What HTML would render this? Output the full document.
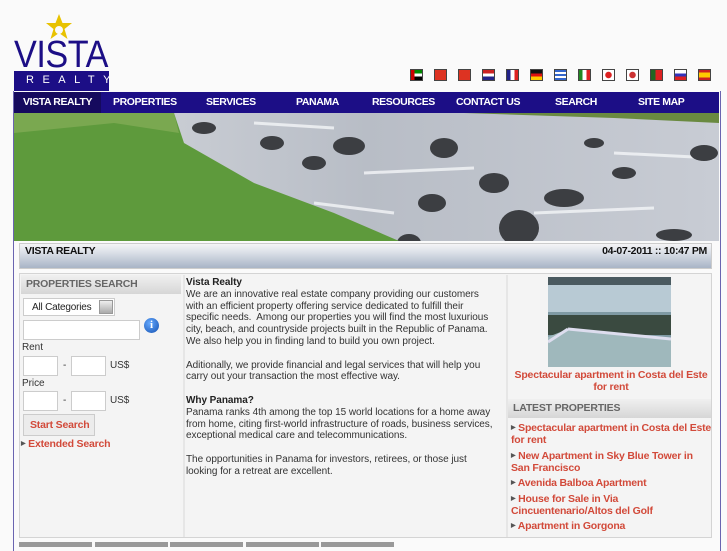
<!DOCTYPE html>
<html><head><meta charset="utf-8"><style>
*{margin:0;padding:0;box-sizing:border-box}
body{width:727px;height:545px;overflow:hidden;background:#fafafa;font-family:"Liberation Sans",sans-serif;position:relative}
.abs{position:absolute;white-space:nowrap}
#wrap{left:13px;top:91px;width:708px;height:460px;border-left:1px solid #6a64b0;border-right:1px solid #6a64b0}
#nav{left:14px;top:92px;width:705px;height:21px;background:#1c0e86;color:#fff;font-weight:bold;font-size:10.5px}
#nav span{position:absolute;top:4px;letter-spacing:-0.4px}
.flag{position:absolute;top:69px;width:13px;height:12px;border:1px solid #444}
.hbar{left:19px;top:243px;width:693px;height:26px;background:linear-gradient(#f4f4f6,#dfe3ea 30%,#a8b4c6);border:1px solid #ccc;font-size:10.5px;font-weight:bold;color:#111;letter-spacing:-0.3px}
.box{left:19px;top:273px;width:693px;height:265px;border:1px solid #d4d4d4;background:#f4f4f4}
.t{font-size:10px;color:#333;line-height:11.8px;letter-spacing:-0.05px}
.sh{background:linear-gradient(#f0f0f0,#d6d6d6);font-weight:bold;font-size:10.5px;color:#666;height:19px;padding:3px 0 0 5px;letter-spacing:-0.2px}
.inp{position:absolute;background:#fff;border:1px solid #ccc}
.red{color:#d24a3a;font-weight:bold;font-size:10.5px;letter-spacing:-0.2px}
.lp{position:absolute;left:511px;font-size:10.5px;color:#d24a3a;font-weight:bold;line-height:12px;letter-spacing:-0.2px;white-space:nowrap}
.arr{font-size:6px;color:#555;vertical-align:2px}
</style></head><body>
<svg class="abs" style="left:44px;top:14px" width="30" height="28" viewBox="0 0 30 28"><polygon points="15,0 18.5,9 28,9 20.5,15 23.5,25 15,19 6.5,25 9.5,15 2,9 11.5,9" fill="#e8c200"/><circle cx="15" cy="16" r="4" fill="#fafafa"/></svg>
<div class="abs" style="left:14px;top:36px;font-size:38px;line-height:38px;color:#1c0e86;transform:scaleX(0.9);transform-origin:left top;letter-spacing:-0.5px">VISTA</div>
<div class="abs" style="left:14px;top:71px;width:95px;height:20px;background:#1c0e86;color:#fff;font-size:11px;letter-spacing:8.5px;padding:3px 0 0 12px;overflow:hidden">REALTY</div>
<div class="flag" style="left:410px;background:linear-gradient(90deg,#c00 30%,transparent 30%),linear-gradient(#080 33%,#fff 33%,#fff 66%,#000 66%)"></div>
<div class="flag" style="left:434px;background:#d32"></div>
<div class="flag" style="left:458px;background:#d32"></div>
<div class="flag" style="left:482px;background:linear-gradient(#c22 33%,#fff 33%,#fff 66%,#228 66%)"></div>
<div class="flag" style="left:506px;background:linear-gradient(90deg,#228 33%,#fff 33%,#fff 66%,#d22 66%)"></div>
<div class="flag" style="left:530px;background:linear-gradient(#111 33%,#d11 33%,#d11 66%,#fc0 66%)"></div>
<div class="flag" style="left:554px;background:repeating-linear-gradient(#36c 0 2px,#fff 2px 4px)"></div>
<div class="flag" style="left:578px;background:linear-gradient(90deg,#282 33%,#fff 33%,#fff 66%,#d22 66%)"></div>
<div class="flag" style="left:602px;background:radial-gradient(circle,#d22 3px,#fff 3.5px)"></div>
<div class="flag" style="left:626px;background:radial-gradient(circle,#c33 3px,#fff 3.5px)"></div>
<div class="flag" style="left:650px;background:linear-gradient(90deg,#262 40%,#d22 40%)"></div>
<div class="flag" style="left:674px;background:linear-gradient(#fff 33%,#33b 33%,#33b 66%,#d22 66%)"></div>
<div class="flag" style="left:698px;background:linear-gradient(#c22 25%,#fc0 25%,#fc0 75%,#c22 75%)"></div>
<div id="wrap" class="abs"></div>
<div id="nav" class="abs">
<div class="abs" style="left:0;top:0;width:87px;height:21px;background:#150a5e"></div>
<span style="left:9px">VISTA REALTY</span><span style="left:99px">PROPERTIES</span><span style="left:192px">SERVICES</span><span style="left:282px">PANAMA</span><span style="left:358px">RESOURCES</span><span style="left:442px">CONTACT US</span><span style="left:541px">SEARCH</span><span style="left:624px">SITE MAP</span>
</div>
<svg class="abs" style="left:14px;top:113px" width="705" height="128">
<defs><linearGradient id="w" x1="0" x2="1"><stop offset="0" stop-color="#d6d9de"/><stop offset="0.5" stop-color="#b8bdc6"/><stop offset="1" stop-color="#c8ccd4"/></linearGradient></defs>
<rect width="705" height="128" fill="url(#w)"/>
<g stroke="#f4f6f8" stroke-width="3" opacity="0.8"><line x1="240" y1="10" x2="320" y2="15"/><line x1="350" y1="60" x2="460" y2="55"/><line x1="520" y1="100" x2="640" y2="95"/><line x1="600" y1="40" x2="700" y2="45"/><line x1="300" y1="90" x2="380" y2="100"/></g>
<g fill="#3c3e42">
<ellipse cx="258" cy="30" rx="12" ry="7"/><ellipse cx="335" cy="33" rx="16" ry="9"/><ellipse cx="430" cy="35" rx="14" ry="10"/><ellipse cx="300" cy="50" rx="12" ry="7"/><ellipse cx="480" cy="70" rx="15" ry="10"/><ellipse cx="418" cy="90" rx="14" ry="9"/><ellipse cx="505" cy="115" rx="20" ry="18"/><ellipse cx="395" cy="130" rx="12" ry="9"/><ellipse cx="550" cy="85" rx="20" ry="9"/><ellipse cx="690" cy="40" rx="14" ry="8"/><ellipse cx="610" cy="60" rx="12" ry="6"/><ellipse cx="660" cy="122" rx="18" ry="6"/><ellipse cx="190" cy="15" rx="12" ry="6"/><ellipse cx="580" cy="30" rx="10" ry="5"/></g>
<polygon points="0,0 160,0 170,30 240,70 320,100 385,128 0,128" fill="#5e9a3c"/>
<polygon points="0,0 160,0 165,20 100,10 0,20" fill="#7aa850"/>
<polygon points="450,0 705,0 705,10 600,5" fill="#6a8a40"/>
</svg>
<div class="hbar abs"><span class="abs" style="left:5px;top:1px">VISTA REALTY</span><span class="abs" style="right:4px;top:1px">04-07-2011 :: 10:47 PM</span></div>
<div class="box abs"></div>
<div class="abs" style="left:183px;top:275px;width:2px;height:262px;background:#e6e6e6"></div>
<div class="abs" style="left:506px;top:275px;width:2px;height:262px;background:#e6e6e6"></div>
<div class="abs sh" style="left:21px;top:275px;width:160px">PROPERTIES SEARCH</div>
<div class="inp" style="left:23px;top:298px;width:92px;height:18px;font-size:10px;color:#222;padding:3px 0 0 8px;letter-spacing:-0.2px">All Categories</div>
<div class="abs" style="left:99px;top:300px;width:14px;height:14px;background:linear-gradient(#eee,#aaa);border:1px solid #999"></div>
<div class="inp" style="left:23px;top:320px;width:117px;height:20px"></div>
<div class="abs" style="left:144px;top:318px;width:15px;height:15px;border-radius:50%;background:radial-gradient(circle at 40% 35%,#6af,#1350b0);color:#fff;font-weight:bold;font-size:11px;text-align:center;line-height:15px;font-family:'Liberation Serif',serif">i</div>
<div class="abs t" style="left:22px;top:342px">Rent</div>
<div class="inp" style="left:23px;top:356px;width:35px;height:20px"></div><div class="abs t" style="left:63px;top:360px">-</div>
<div class="inp" style="left:71px;top:356px;width:35px;height:20px"></div><div class="abs t" style="left:110px;top:360px">US$</div>
<div class="abs t" style="left:22px;top:378px">Price</div>
<div class="inp" style="left:23px;top:391px;width:35px;height:20px"></div><div class="abs t" style="left:63px;top:395px">-</div>
<div class="inp" style="left:71px;top:391px;width:35px;height:20px"></div><div class="abs t" style="left:110px;top:395px">US$</div>
<div class="abs red" style="left:23px;top:414px;width:72px;height:22px;background:#ececec;border:1px solid #ccc;padding:4px 0 0 6px">Start Search</div>
<div class="abs red" style="left:21px;top:438px"><span class="arr">▶</span> Extended Search</div>
<div class="abs t" style="left:186px;top:277px;width:320px;white-space:normal">
<b style="color:#222">Vista Realty</b><br>We are an innovative real estate company providing our customers<br>with an efficient property offering service dedicated to fulfill their<br>specific needs.&nbsp; Among our properties you will find the most luxurious<br>city, beach, and countryside projects built in the Republic of Panama.<br>We also help you in finding land to build you own project.<br><br>Aditionally, we provide financial and legal services that will help you<br>carry out your transaction the most effective way.<br><br><b style="color:#222">Why Panama?</b><br>Panama ranks 4th among the top 15 world locations for a home away<br>from home, citing first-world infrastructure of roads, business services,<br>exceptional medical care and telecommunications.<br><br>The opportunities in Panama for investors, retirees, or those just<br>looking for a retreat are excellent.</div>
<svg class="abs" style="left:548px;top:277px" width="123" height="90"><rect width="123" height="90" fill="#7f9aa4"/><rect width="123" height="35" fill="#b8cad4"/><rect y="0" width="123" height="8" fill="#4a5a60"/><rect y="38" width="123" height="20" fill="#3a4a40"/><polygon points="0,90 0,60 20,52 123,62 123,90" fill="#9fb8bc"/><polyline points="20,52 123,62" stroke="#dde" stroke-width="3" fill="none"/><polyline points="0,65 20,52" stroke="#dde" stroke-width="3" fill="none"/></svg>
<div class="abs red" style="left:510px;top:369px;width:202px;text-align:center;line-height:12px">Spectacular apartment in Costa del Este<br>for rent</div>
<div class="abs sh" style="left:508px;top:399px;width:203px">LATEST PROPERTIES</div>
<div class="lp" style="top:422px"><span class="arr">▶</span> Spectacular apartment in Costa del Este<br>for rent</div>
<div class="lp" style="top:450px"><span class="arr">▶</span> New Apartment in Sky Blue Tower in<br>San Francisco</div>
<div class="lp" style="top:477px"><span class="arr">▶</span> Avenida Balboa Apartment</div>
<div class="lp" style="top:493px"><span class="arr">▶</span> House for Sale in Via<br>Cincuentenario/Altos del Golf</div>
<div class="lp" style="top:520px"><span class="arr">▶</span> Apartment in Gorgona</div>
<div class="abs" style="left:19px;top:542px;width:73px;height:5px;background:#999"></div>
<div class="abs" style="left:95px;top:542px;width:73px;height:5px;background:#999"></div>
<div class="abs" style="left:170px;top:542px;width:73px;height:5px;background:#999"></div>
<div class="abs" style="left:246px;top:542px;width:73px;height:5px;background:#999"></div>
<div class="abs" style="left:321px;top:542px;width:73px;height:5px;background:#999"></div>
</body></html>
